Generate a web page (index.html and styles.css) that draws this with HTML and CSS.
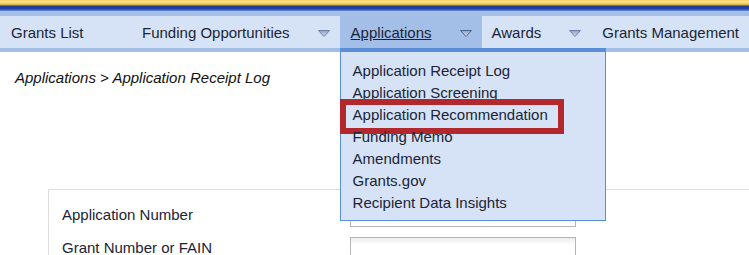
FILE: index.html
```html
<!DOCTYPE html>
<html>
<head>
<meta charset="utf-8">
<link rel="stylesheet" href="styles.css">
</head>
<body>
<div class="topbar"></div>
<nav class="menubar">
  <ul class="menu">
    <li class="item first"><span class="label">Grants List</span></li>
    <li class="item drop funding"><span class="label">Funding Opportunities</span><svg class="tri" viewBox="0 0 12 7" width="12" height="7"><defs><linearGradient id="g1" x1="0" y1="0" x2="0" y2="1"><stop offset="0" stop-color="#8da0c3"/><stop offset="1" stop-color="#d9e2f0"/></linearGradient></defs><polygon points="0.5,0.5 11.5,0.5 6,6.5" fill="url(#g1)" stroke="#6e82a8" stroke-width="1"/></svg></li>
    <li class="item drop active"><span class="label u">Applications</span><svg class="tri" viewBox="0 0 12 7" width="12" height="7"><polygon points="0.5,0.5 11.5,0.5 6,6.5" fill="url(#g1)" stroke="#4d6490" stroke-width="1"/></svg>
      <div class="dropdown">
        <ul class="sub">
          <li>Application Receipt Log</li>
          <li>Application Screening</li>
          <li class="mark">Application Recommendation</li>
          <li>Funding Memo</li>
          <li>Amendments</li>
          <li>Grants.gov</li>
          <li>Recipient Data Insights</li>
        </ul>
      </div>
    </li>
    <li class="item drop awards"><span class="label">Awards</span><svg class="tri" viewBox="0 0 12 7" width="12" height="7"><polygon points="0.5,0.5 11.5,0.5 6,6.5" fill="url(#g1)" stroke="#6e82a8" stroke-width="1"/></svg></li>
    <li class="item last"><span class="label">Grants Management</span></li>
  </ul>
</nav>
<main class="content">
  <p class="crumb">Applications &gt; Application Receipt Log</p>
  <section class="panel">
    <div class="row"><span class="flabel">Application Number</span><span class="input"></span></div>
    <div class="row"><span class="flabel">Grant Number or FAIN</span><span class="input"></span></div>
  </section>
</main>
</body>
</html>
```

FILE: styles.css
```css
html, body {
  margin: 0;
  padding: 0;
  background: #ffffff;
  font-family: "Liberation Sans", Arial, sans-serif;
  font-size: 15px;
  color: #1b2436;
  overflow: hidden;
}

body {
  height: 255px;
}

.topbar {
  height: 11px;
  background: linear-gradient(to bottom,
    #f7d36a 0px, #fde28a 2px, #f3c64e 4px, #c9a63a 5px,
    #23409a 6px, #1a3a9a 8px, #3f63c0 10px, #7a9ad8 11px);
}

.menubar {
  background: #a3bfe8;
  padding: 5px 0 4px 0;
}

.menu {
  list-style: none;
  margin: 0;
  padding: 0;
  display: flex;
  background: #d6e3f6;
}

.item {
  position: relative;
  height: 32px;
  display: flex;
  align-items: center;
  padding: 0 10px 0 11px;
  white-space: nowrap;
}

.item.first { width: 121px; padding-right: 0; }
.item.awards { padding-left: 10px; }
.item.last { flex: 1; }

.tri {
  display: block;
  margin-left: 28px;
  margin-top: 3px;
}

.active {
  background: #a3bfe8;
}

.u { text-decoration: underline; }

.dropdown {
  position: absolute;
  left: 0;
  top: 32px;
  width: 264px;
  background: #d6e3f6;
  border: 1px solid #5b8ed8;
  border-top: 4px solid #5b8ed8;
  z-index: 5;
}

.sub {
  list-style: none;
  margin: 0;
  padding: 8px 0 6px 12px;
  position: relative;
}

.sub li {
  height: 22px;
  line-height: 22px;
  position: relative;
}

.sub li.mark::after {
  content: "";
  position: absolute;
  left: -13px;
  top: -5px;
  width: 212px;
  height: 23px;
  border: 6px solid #b3282d;
}

.content {
  padding: 0;
}

.crumb {
  margin: 0;
  padding: 17px 0 0 15px;
  height: 17px;
  line-height: 17px;
  font-style: italic;
  color: #111111;
}

.panel {
  margin: 103px 0 0 48px;
  width: 900px;
  border: 1px solid #dddddd;
  padding: 11px 0 0 13px;
}

.row {
  display: flex;
  align-items: center;
  height: 26px;
  margin-bottom: 10px;
}

.flabel {
  width: 288px;
  color: #1b2436;
}

.row + .row .flabel {
  margin-top: -5px;
}

.input {
  display: block;
  width: 224px;
  height: 24px;
  border: 1px solid #b5b5b5;
  background: linear-gradient(to bottom, #ececec 0px, #ffffff 7px);
}
```
